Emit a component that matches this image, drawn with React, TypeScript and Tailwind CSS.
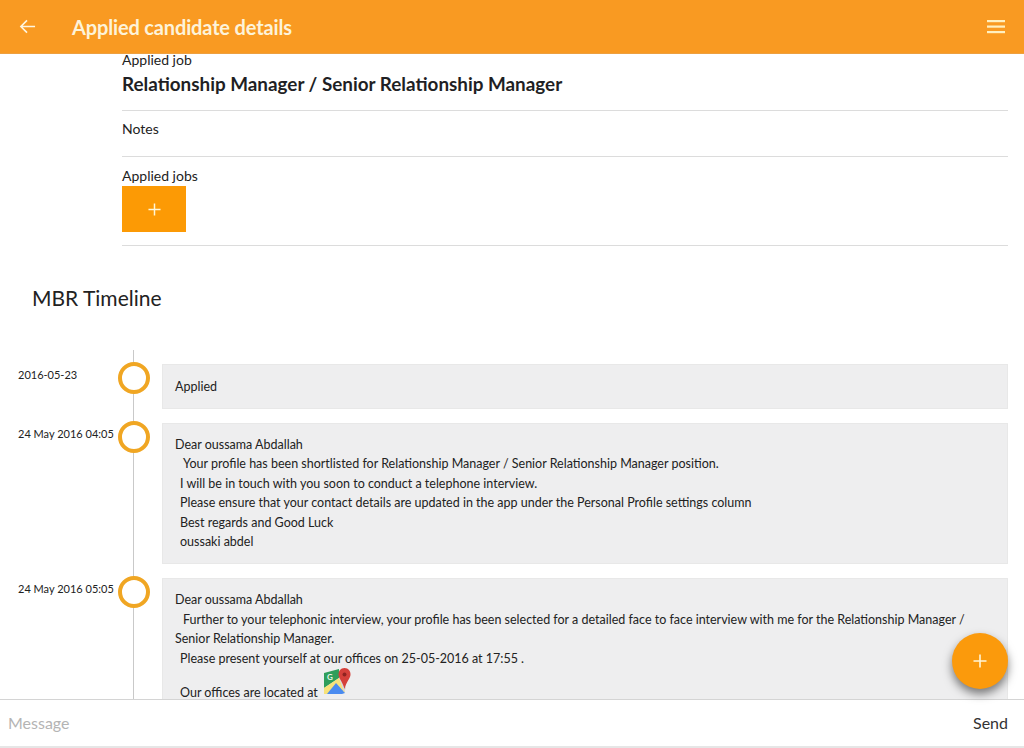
import React from "react";

function Plus({ size }: { size: number }) {
  return (
    <svg width={size} height={size} viewBox="0 0 14 14" fill="none" stroke="#fff6d8" strokeWidth="1.6">
      <path d="M7 0.5V13.5M0.5 7H13.5" />
    </svg>
  );
}

function MapsIcon() {
  return (
    <svg width="27" height="27" viewBox="0 0 27 27" className="inline-block align-baseline ml-[3px]">
      <path d="M0 5 L15 1 L15 10 L0 20 Z" fill="#2e9e5b" />
      <path d="M0 20 L15 10 L21 24 L6 26 L0 26 Z" fill="#f7e27a" />
      <path d="M3 26 L12 15 L21 25 L18 26 Z" fill="#4a8bf0" />
      <path d="M15 3 L20 2 L22 20 L20 24 L15 10 Z" fill="#d8d8d8" />
      <path d="M20.5 0 C16.5 0 14.5 3 14.5 6.5 C14.5 10.5 18.5 13 20.5 21 C22.5 13 26.5 10.5 26.5 6.5 C26.5 3 24.5 0 20.5 0 Z" fill="#d5403a" />
      <circle cx="20.5" cy="6.5" r="2" fill="#8f2320" />
      <text x="3" y="12" fontSize="8" fontWeight="700" fill="#e8f5e8" fontFamily="Lato, sans-serif">G</text>
    </svg>
  );
}

function Row({ date, children, top }: { date: string; children: React.ReactNode; top: string }) {
  return (
    <div className={`flex ${top}`}>
      <div className="w-[118px] shrink-0 pl-[18px] text-[11px] leading-[14px] pt-[4px]">{date}</div>
      <div className="w-[32px] h-[32px] shrink-0 rounded-full border-[4px] border-[#f0a623] bg-white -mt-[2px] z-10" />
      <div className="ml-[12px] w-[846px] shrink-0 bg-[#eeeeef] border border-[#e8e8e8] pl-[12px] pr-[20px] text-[12.5px] leading-[19.5px] text-[#222]">
        {children}
      </div>
    </div>
  );
}

export default function App() {
  return (
    <div className="relative w-[1024px] h-[748px] overflow-hidden bg-white flex flex-col text-[#222] font-['Lato','Liberation_Sans',sans-serif]">
      <header className="h-[54px] shrink-0 bg-[#f99a22] flex items-center z-20 border-b border-[#eda040]">
        <svg width="17" height="17" viewBox="0 0 18 18" fill="none" stroke="#fff6e0" strokeWidth="1.7" className="ml-[19px] -mt-px">
          <path d="M17 9H2M8.5 2.5L2 9L8.5 15.5" />
        </svg>
        <h1 className="ml-[36px] text-[20px] font-bold text-[#fdf3d9] tracking-[-0.15px]">Applied candidate details</h1>
        <svg width="18" height="14" viewBox="0 0 18 14" className="ml-auto mr-[19px]" fill="#fff0c0">
          <rect x="0" y="0" width="18" height="2.2" />
          <rect x="0" y="5.5" width="18" height="2.2" />
          <rect x="0" y="11" width="18" height="2.2" />
        </svg>
      </header>

      <main className="relative flex-1 min-h-0">
        <section className="ml-[122px] mr-[16px]">
          <div className="border-b border-[#dcdcdc] h-[58px]">
            <div className="text-[14px] leading-[13px] -mt-px">Applied job</div>
            <div className="text-[18.85px] leading-[22px] font-bold mt-[7px] text-[#1f1f24]">Relationship Manager / Senior Relationship Manager</div>
          </div>
          <div className="border-b border-[#dcdcdc] h-[46px] pt-[11px] text-[14px] leading-[14px]">Notes</div>
          <div className="border-b border-[#dcdcdc] h-[89px] pt-[12px]">
            <div className="text-[14px] leading-[14px]">Applied jobs</div>
            <button className="mt-[3px] w-[64px] h-[46px] bg-[#fc9a05] flex items-center justify-center">
              <Plus size={13} />
            </button>
          </div>
        </section>

        <h2 className="ml-[32px] mt-[38px] text-[21px] leading-[28px] text-[#222]">MBR Timeline</h2>

        <div className="absolute left-[133px] top-[296px] bottom-0 w-px bg-[#c9c9c9]" />

        <div className="mt-[52px]">
          <Row date="2016-05-23" top="">
            <div className="h-[43px] pt-[12px]">Applied</div>
          </Row>
          <Row date="24 May 2016 04:05" top="mt-[14px]">
            <div className="h-[139px] pt-[10.5px]">
              <div>Dear oussama Abdallah</div>
              <div className="pl-[8px]">Your profile has been shortlisted for Relationship Manager / Senior Relationship Manager position.</div>
              <div className="pl-[5px]">I will be in touch with you soon to conduct a telephone interview.</div>
              <div className="pl-[5px]">Please ensure that your contact details are updated in the app under the Personal Profile settings column</div>
              <div className="pl-[5px]">Best regards and Good Luck</div>
              <div className="pl-[5px]">oussaki abdel</div>
            </div>
          </Row>
          <Row date="24 May 2016 05:05" top="mt-[14px]">
            <div className="h-[160px] pt-[11px]">
              <div>Dear oussama Abdallah</div>
              <div className="indent-[8px]">Further to your telephonic interview, your profile has been selected for a detailed face to face interview with me for the Relationship Manager / Senior Relationship Manager.</div>
              <div className="pl-[5px]">Please present yourself at our offices on 25-05-2016 at 17:55 .</div>
              <div className="pl-[5px]"><span className="relative top-[2px]">Our offices are located at</span> <MapsIcon /></div>
            </div>
          </Row>
        </div>
      </main>

      <footer className="relative h-[49px] shrink-0 bg-white border-t border-[#d4d4d4] border-b-2 border-b-[#e6e6e6] flex items-center justify-between pl-[8px] pr-[16px] z-20">
        <span className="text-[16px] text-[#b4b4b4]">Message</span>
        <span className="text-[16px] text-[#333]">Send</span>
      </footer>

      <button className="absolute left-[952px] top-[633px] w-[56px] h-[56px] rounded-full bg-[#fb9a0c] flex items-center justify-center shadow-[0_5px_10px_rgba(0,0,0,0.5)] z-30">
        <Plus size={14} />
      </button>
    </div>
  );
}
